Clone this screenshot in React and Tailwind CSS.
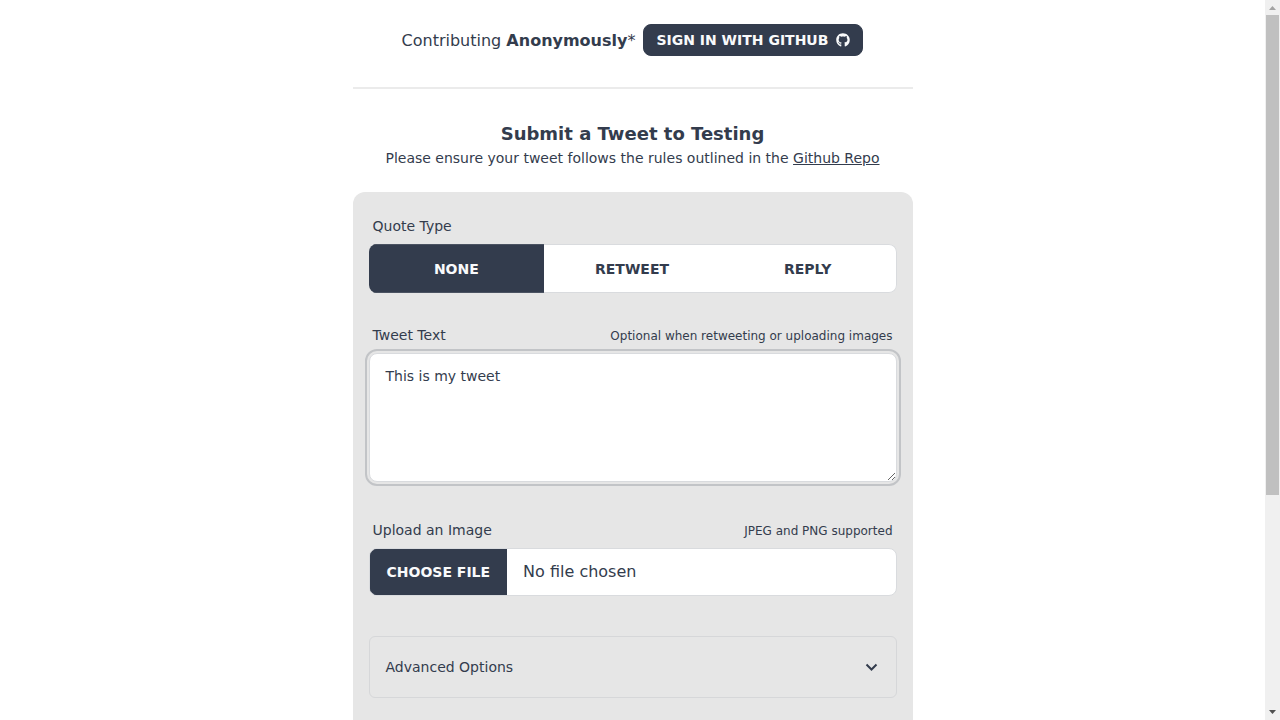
import { FaGithub } from 'react-icons/fa';
import { useState } from 'react';

const quoteTypes = ['None', 'Retweet', 'Reply'];

function FieldLabel({ htmlFor, hint, children }) {
  return (
    <div className="flex items-end justify-between px-1 py-2">
      <label htmlFor={htmlFor} className="text-sm">{children}</label>
      {hint && <span className="text-xs leading-[18px]">{hint}</span>}
    </div>
  );
}

function QuoteTypePicker() {
  const [selected, setSelected] = useState('None');
  return (
    <div role="group" aria-labelledby="quote-type-label">
      <div id="quote-type-label" className="px-1 py-2 text-sm">Quote Type</div>
      <div className="flex h-[49px] overflow-hidden rounded-lg">
        {quoteTypes.map((type) => (
          <button
            key={type}
            type="button"
            aria-pressed={type === selected}
            onClick={() => setSelected(type)}
            className={
              type === selected
                ? 'flex-1 border-y border-[#4b5362] bg-[#333c4d] text-sm font-bold uppercase text-[#f9fafb]'
                : 'flex-1 border-y border-[#d9dbde] bg-white text-sm font-bold uppercase last:rounded-r-lg last:border-r'
            }
          >
            {type}
          </button>
        ))}
      </div>
    </div>
  );
}

function ScrollTrack() {
  return (
    <div aria-hidden="true" className="flex w-[15px] shrink-0 flex-col items-center bg-[#f0f0f0]">
      <svg className="h-[15px] w-[15px] shrink-0" viewBox="0 0 15 15">
        <path d="M4 10 L7.5 6 L11 10 Z" fill="#a3a3a3" />
      </svg>
      <div className="flex min-h-0 w-[13px] flex-1 flex-col">
        <div className="h-[480px] bg-[#c0c0c0]" />
      </div>
      <svg className="h-[15px] w-[15px] shrink-0" viewBox="0 0 15 15">
        <path d="M4 5 L7.5 9 L11 5 Z" fill="#505050" />
      </svg>
    </div>
  );
}

export default function App() {
  const [text, setText] = useState('This is my tweet');
  return (
    <div className="flex h-screen bg-white font-['DejaVu_Sans',sans-serif] text-[#333c4d]">
      <main className="min-w-0 flex-1 overflow-y-auto [scrollbar-width:none]">
        <div className="mx-auto w-full max-w-[560px] pt-6">
          <header className="flex items-center justify-center gap-2">
            <p className="pt-px">Contributing <strong>Anonymously</strong>*</p>
            <button type="button" className="flex h-8 items-center gap-2 rounded-lg border border-[#333c4d] bg-[#333c4d] px-3 text-sm font-bold uppercase text-[#f9fafb]">
              Sign in with Github
              <FaGithub className="size-3.5" />
            </button>
          </header>
          <hr className="mt-[31px] border-t-2 border-[#ebebeb]" />
          <div className="mt-[31px] text-center">
            <h1 className="text-lg font-bold">Submit a Tweet to Testing</h1>
            <p className="text-sm">
              Please ensure your tweet follows the rules outlined in the{' '}
              <a href="#rules" className="underline">Github Repo</a>
            </p>
          </div>
          <form className="mt-6 rounded-xl bg-[#e6e6e6] px-4 pt-4 pb-80">
            <QuoteTypePicker />
            <div className="mt-6">
              <FieldLabel htmlFor="tweet-text" hint="Optional when retweeting or uploading images">Tweet Text</FieldLabel>
              <textarea
                id="tweet-text"
                value={text}
                onChange={(event) => setText(event.target.value)}
                className="block h-[129px] w-full resize-y rounded-lg border border-[#d9dbde] bg-white px-4 py-3 text-sm outline-2 outline-offset-2 outline-[#c2c4c7]"
              />
            </div>
            <div className="mt-[30px]">
              <FieldLabel htmlFor="tweet-image" hint="JPEG and PNG supported">Upload an Image</FieldLabel>
              <input
                id="tweet-image"
                type="file"
                accept="image/jpeg,image/png"
                className="block h-12 w-full overflow-hidden rounded-lg border border-[#d9dbde] bg-white pr-4 text-base file:mr-4 file:h-full file:border file:border-[#333c4d] file:bg-[#333c4d] file:px-4 file:text-sm file:font-bold file:uppercase file:text-[#f9fafb]"
              />
            </div>
            <button type="button" aria-expanded="false" className="mt-10 flex h-[62px] w-full items-center justify-between rounded-md border border-[#d6d7d9] px-4 text-sm">
              Advanced Options
              <svg className="size-4" viewBox="0 0 16 16" fill="none" stroke="currentColor" strokeWidth="2" aria-hidden="true">
                <path d="M2.5 5.5 L7.5 10.5 L12.5 5.5" />
              </svg>
            </button>
          </form>
        </div>
      </main>
      <ScrollTrack />
    </div>
  );
}
